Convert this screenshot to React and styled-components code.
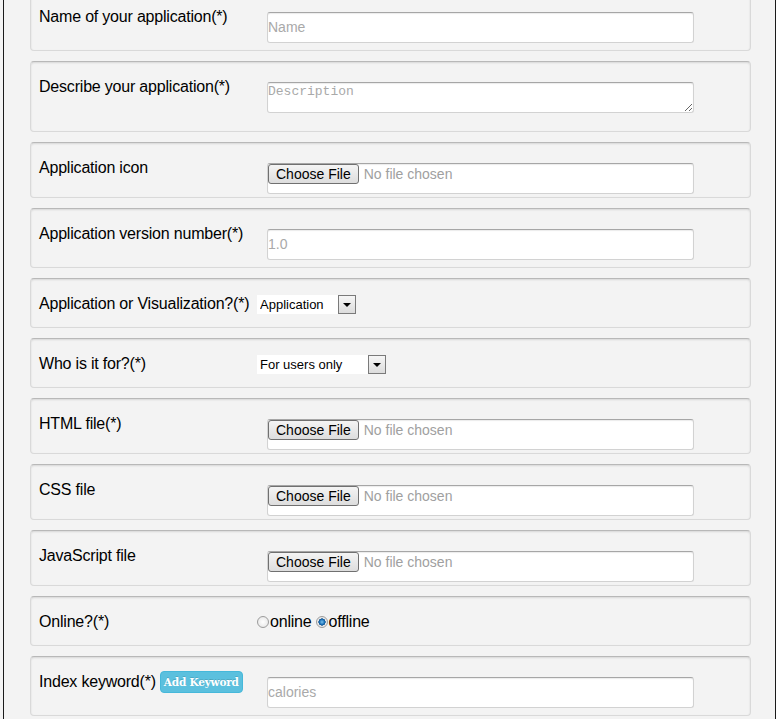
import React from 'react';
import styled, { createGlobalStyle } from 'styled-components';

const GlobalStyle = createGlobalStyle`
  html, body {
    margin: 0;
    background: #fff;
  }
  body {
    font-family: "Liberation Sans", Arial, sans-serif;
  }
`;

const Page = styled.div`
  width: 776px;
  height: 719px;
  padding-left: 3px;
  box-sizing: border-box;
  background: #f3f3f3;
  display: flex;
  overflow: hidden;
`;

const Frame = styled.div`
  flex: 1;
  display: flex;
  flex-direction: column;
  gap: 10px;
  padding: 0 24px 0 26px;
  border-left: 1px solid #1a1a1a;
  border-right: 1px solid #1a1a1a;
  background: #f3f3f3;

  & > :first-child {
    margin-top: -9px;
  }
`;

const Card = styled.div`
  flex-shrink: 0;
  display: flex;
  align-items: flex-start;
  padding: 16px 8px ${({ $bottom }) => $bottom}px;
  border: 1px solid #d9d9d9;
  border-top-color: #b8b8b8;
  border-radius: 4px;
  box-shadow: inset 0 1px 2px rgba(0, 0, 0, 0.12);
  background: #f3f3f3;
`;

const Label = styled.div`
  width: 218px;
  flex-shrink: 0;
  display: flex;
  align-items: center;
  gap: 4px;
  font-size: 16px;
  line-height: 18px;
  letter-spacing: -0.2px;
  color: #000;
  white-space: nowrap;
`;

const fieldBox = `
  margin: 4px 0 0 10px;
  width: 427px;
  height: 31px;
  box-sizing: border-box;
  border: 1px solid #d2d2d2;
  border-top-color: #a6a6a6;
  border-radius: 3px;
  box-shadow: inset 0 1px 1px rgba(0, 0, 0, 0.08);
  background: #fff;
`;

const TextInput = styled.input`
  ${fieldBox}
  padding: 0 0 2px;
  font: 14px "Liberation Sans", Arial, sans-serif;
  color: #333;
  outline: none;

  &::placeholder {
    color: #a9a9a9;
  }
`;

const TextArea = styled.textarea`
  ${fieldBox}
  display: block;
  padding: 1px 0 0 0;
  font: 13px/15px "Liberation Mono", "Courier New", monospace;
  color: #333;
  outline: none;

  &::placeholder {
    color: #a9a9a9;
  }
`;

const FileBox = styled.div`
  ${fieldBox}
  display: flex;
  align-items: flex-start;
  gap: 5px;
`;

const FileButton = styled.button`
  height: 20px;
  margin: 0;
  padding: 0 7px;
  border: 1px solid #707070;
  border-radius: 3px;
  background: linear-gradient(#f4f4f4, #dddddd);
  font: 14px "Liberation Sans", Arial, sans-serif;
  line-height: 18px;
  color: #000;
`;

const FileStatus = styled.span`
  font-size: 14px;
  line-height: 20px;
  color: #a0a0a0;
`;

const SelectWrap = styled.div`
  display: flex;
  height: 19px;
  margin: 0 0 -1px;
`;

const Select = styled.select`
  appearance: none;
  width: ${({ $width }) => $width}px;
  height: 19px;
  margin: 0;
  padding: 0 3px;
  border: none;
  border-radius: 0;
  background: #fff;
  font: 13px "Liberation Sans", Arial, sans-serif;
  color: #000;
  outline: none;
`;

const Arrow = styled.span`
  width: 18px;
  height: 19px;
  box-sizing: border-box;
  display: flex;
  align-items: center;
  justify-content: center;
  border: 1px solid #7a7a7a;
  background: linear-gradient(#f6f6f6, #dcdcdc);

  &::after {
    content: "";
    border-left: 4px solid transparent;
    border-right: 4px solid transparent;
    border-top: 4px solid #000;
    margin-top: 1px;
  }
`;

const RadioRow = styled.div`
  display: flex;
  align-items: center;
  height: 18px;
  font-size: 16px;
  letter-spacing: -0.2px;
  color: #000;
`;

const RadioOption = styled.label`
  display: flex;
  align-items: center;
  margin-right: 4px;
`;

const Radio = styled.input`
  appearance: none;
  width: 12px;
  height: 12px;
  margin: 0 1px 0 0;
  border: 1px solid #9c9c9c;
  border-radius: 50%;
  background: radial-gradient(circle, #ffffff 0, #e2e2e2 100%);

  &:checked {
    background: radial-gradient(circle, #7cc4f0 0, #1a6fb5 2.5px, #0d4f8c 3.4px, #e6e6e6 3.8px, #f4f4f4 100%);
  }
`;

const KeywordButton = styled.button`
  height: 22px;
  margin: -2px 0;
  padding: 0 3px;
  border: 1px solid #46b8da;
  border-radius: 4px;
  background: #5bc0de;
  color: #fff;
  font: bold 10.5px "DejaVu Serif", "Liberation Serif", serif;
  letter-spacing: -0.2px;
  text-shadow: 0 -1px 0 rgba(0, 0, 0, 0.15);
`;

const FileField = () => (
  <FileBox>
    <FileButton type="button">Choose File</FileButton>
    <FileStatus>No file chosen</FileStatus>
  </FileBox>
);

const DropDown = ({ width, value, options }) => (
  <SelectWrap>
    <Select $width={width} defaultValue={value}>
      {options.map((o) => (
        <option key={o}>{o}</option>
      ))}
    </Select>
    <Arrow />
  </SelectWrap>
);

const App = () => {
  return (
    <>
      <GlobalStyle />
      <Page>
        <Frame>
          <Card $bottom={7}>
            <Label>Name of your application(*)</Label>
            <TextInput placeholder="Name" />
          </Card>
          <Card $bottom={18}>
            <Label>Describe your application(*)</Label>
            <TextArea placeholder="Description" />
          </Card>
          <Card $bottom={3}>
            <Label>Application icon</Label>
            <FileField />
          </Card>
          <Card $bottom={7}>
            <Label>Application version number(*)</Label>
            <TextInput placeholder="1.0" />
          </Card>
          <Card $bottom={14}>
            <Label>Application or Visualization?(*)</Label>
            <DropDown width={81} value="Application" options={['Application', 'Visualization']} />
          </Card>
          <Card $bottom={14}>
            <Label>Who is it for?(*)</Label>
            <DropDown width={111} value="For users only" options={['For users only', 'For everyone']} />
          </Card>
          <Card $bottom={3}>
            <Label>HTML file(*)</Label>
            <FileField />
          </Card>
          <Card $bottom={3}>
            <Label>CSS file</Label>
            <FileField />
          </Card>
          <Card $bottom={3}>
            <Label>JavaScript file</Label>
            <FileField />
          </Card>
          <Card $bottom={14}>
            <Label>Online?(*)</Label>
            <RadioRow>
              <RadioOption>
                <Radio type="radio" name="online" value="online" />
                online
              </RadioOption>
              <RadioOption>
                <Radio type="radio" name="online" value="offline" defaultChecked />
                offline
              </RadioOption>
            </RadioRow>
          </Card>
          <Card $bottom={7}>
            <Label>
              Index keyword(*)
              <KeywordButton type="button">Add Keyword</KeywordButton>
            </Label>
            <TextInput placeholder="calories" />
          </Card>
        </Frame>
      </Page>
    </>
  );
};

export default App;
